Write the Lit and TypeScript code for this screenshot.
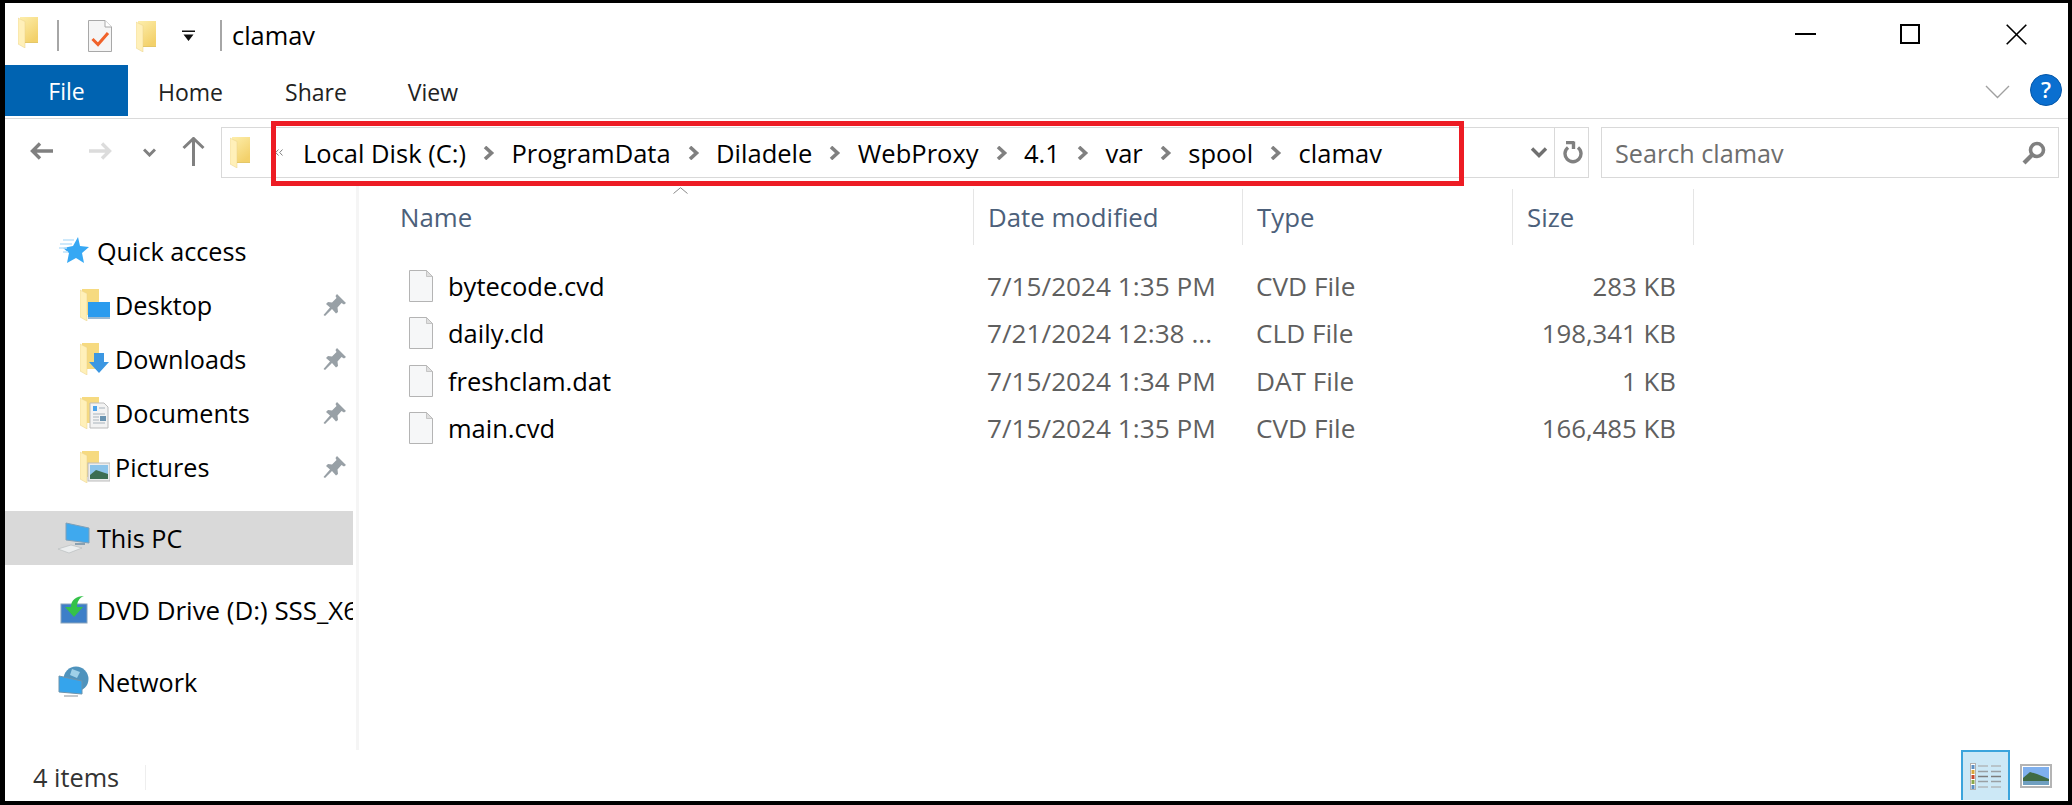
import { LitElement, html, svg, css } from "lit";
import { customElement } from "lit/decorators.js";

const folder = (cls = "") => html`<svg class=${cls} width="20" height="31" viewBox="0 0 20 31">
  <defs><linearGradient id="fb" x1="0" y1="0" x2="0.6" y2="1"><stop offset="0" stop-color="#fdeeac"/><stop offset="1" stop-color="#f3d16b"/></linearGradient></defs>
  <path d="M2 0H20V25H2z" fill="url(#fb)"/>
  <path d="M0 1 L7 4.500 V31 L0 27z" fill="#fff0b9" stroke="#e8d08a" stroke-width=".5"/>
  <path d="M7 25H20V26H7z" fill="#e4c768"/>
</svg>`;

const childIcon = (overlay: unknown) => html`<svg width="30" height="32" viewBox="0 0 30 32">
  <path d="M2 0H19V26H2z" fill="#f6da80"/>
  <path d="M0 1 L7 4.500 V32 L0 28z" fill="#fff0b9" stroke="#e8d08a" stroke-width=".5"/>
  ${overlay}
</svg>`;

const pin = html`<svg width="24" height="24" viewBox="0 0 24 24">
  <path d="M14 1 L23 10 L21 11.500 L18.500 10 L14.500 14.500 L15 19 L13 20.500 L9 16 L2 23 L0.500 22 L7 14.500 L3 11 L5 9 L9 9.500 L13.500 5 L12.500 3z" fill="#98a0a6"/>
</svg>`;

const fileIcon = html`<svg width="24" height="32" viewBox="0 0 24 32">
  <path d="M.5.5H17.500L23.500 6.500V31.500H.5z" fill="#f6f7f8" stroke="#b4b4b4"/>
  <path d="M17.500.5V6.500H23.500z" fill="#dfdfdf" stroke="#b4b4b4" stroke-width=".7"/>
</svg>`;

const chev = html`<svg class="chev" width="12" height="14" viewBox="0 0 12 14"><path d="M2 1 L8.500 7 L2 13" fill="none" stroke="#808080" stroke-width="3.600"/></svg>`;

const files = [
  ["bytecode.cvd", "7/15/2024 1:35 PM", "CVD File", "283 KB"],
  ["daily.cld", "7/21/2024 12:38 ...", "CLD File", "198,341 KB"],
  ["freshclam.dat", "7/15/2024 1:34 PM", "DAT File", "1 KB"],
  ["main.cvd", "7/15/2024 1:35 PM", "CVD File", "166,485 KB"],
];
const crumbs = ["Local Disk (C:)", "ProgramData", "Diladele", "WebProxy", "4.1", "var", "spool", "clamav"];

@customElement("app-root")
export class AppRoot extends LitElement {
  static styles = css`
    :host { display: block; width: 2072px; height: 805px; font-family: "Open Sans", "Noto Sans", sans-serif; font-size: 25.2px; color: #000; }
    * { box-sizing: border-box; }
    svg { display: block; flex: none; }
    .frame { position: relative; width: 2072px; height: 805px; background: #fff; border: solid #000; border-width: 3px 4px 4px 5px; display: flex; flex-direction: column; overflow: hidden; }

    .title { height: 62px; display: flex; align-items: center; flex: none; }
    .title .f1 { margin-left: 13px; margin-top: -4px; }
    .tsep { width: 2px; height: 31px; background: #a6a6a6; margin-top: 3px; }
    .title .s1 { margin-left: 19px; }
    .title .doc { margin-left: 29px; margin-top: 4px; }
    .title .f2 { margin-left: 24px; margin-top: 5px; }
    .title .drop { margin-left: 26px; margin-top: 3px; }
    .title .s2 { margin-left: 25px; }
    .ttext { margin-left: 10px; font-size: 25.4px; line-height: 30px; margin-top: 1px; }
    .wctl { margin-left: auto; display: flex; align-items: center; }
    .wctl .min { margin-right: 84px; }
    .wctl .max { margin-right: 86px; }
    .wctl .cls { margin-right: 41px; }

    .tabs { height: 54px; flex: none; display: flex; align-items: flex-start; border-bottom: 1px solid #dadada; }
    .file-tab { width: 123px; height: 51px; background: #0063b1; color: #fff; display: flex; align-items: center; justify-content: center; font-size: 23px; padding-top: 1px; }
    .tab { font-size: 23px; line-height: 55px; color: #222; }
    .tab.home { margin-left: 30px; }
    .tab.share { margin-left: 62px; }
    .tab.view { margin-left: 61px; }
    .tabs .rchev { margin-left: auto; margin-top: 20px; }
    .tabs .help { margin: 9px 6px 0 20px; width: 32px; height: 32px; border-radius: 50%; background: #0a6fd0; border: 1px solid #0557a8; color: #fff; font-size: 22px; line-height: 29px; text-align: center; font-weight: 600; }

    .nav { height: 67px; flex: none; display: flex; align-items: flex-start; padding-top: 8px; }
    .nav .back { margin-left: 25px; margin-top: 15px; }
    .nav .fwd { margin-left: 36px; margin-top: 15px; }
    .nav .down { margin-left: 31px; margin-top: 21px; }
    .nav .up { margin-left: 26px; margin-top: 10px; }
    .addr { margin-left: 16px; width: 1368px; height: 51px; border: 1px solid #d9d9d9; display: flex; align-items: center; }
    .addr .afolder { margin-left: 8px; }
    .addr .dbl { margin-left: 25px; margin-right: 20px; }
    .crumb { display: flex; align-items: center; gap: 17px; margin-right: 16.5px; font-size: 25.5px; line-height: 30px; white-space: nowrap; }
    .addr .adown { margin-left: auto; margin-right: 6px; }
    .addr .rsep { width: 1px; height: 49px; background: #d9d9d9; margin-right: 8px; }
    .addr .refresh { margin-right: 5px; }
    .search { margin-left: 12px; width: 458px; height: 51px; border: 1px solid #d9d9d9; display: flex; align-items: center; justify-content: space-between; padding: 0 12px 0 13px; color: #6d6d6d; font-size: 25.2px; }

    .red { position: absolute; left: 266px; top: 118px; width: 1193px; height: 65px; border: 5px solid #ed1c24; pointer-events: none; }

    .main { flex: 1; min-height: 0; display: flex; }
    .side { width: 348px; flex: none; padding-top: 38px; overflow: hidden; }
    .vline { width: 6px; flex: none; background: linear-gradient(90deg, #fff 0 3px, #f5f5f5 3px); }
    .row { height: 54px; display: flex; align-items: center; white-space: nowrap; overflow: hidden; position: relative; }
    .row.top { padding-left: 55px; gap: 7px; }
    .row.sub { padding-left: 75px; gap: 5px; }
    .row.top svg { width: 32px; margin-left: -2px; }
    .row.sel { background: #d9d9d9; }
    .row .pin { margin-left: auto; margin-right: 6px; }
    .row.dvd { font-size: 25.9px; }
    .g { margin-top: 17px; }
    .g2 { margin-top: 18px; }

    .list { flex: 1; min-width: 0; padding-top: 3px; position: relative; }
    .cols { display: grid; grid-template-columns: 615px 269px 270px 181px; }
    .head { height: 56px; }
    .head > div { border-right: 1px solid #e5e5e5; display: flex; align-items: center; color: #4c607a; font-size: 25.8px; padding-left: 14px; height: 56px; }
    .head > div:first-child { padding-left: 41px; }
    .sort { position: absolute; left: 314px; top: 1px; }
    .rows { padding-top: 17px; }
    .frow { height: 47.5px; align-items: center; color: #5f5f5f; font-size: 26.2px; }
    .frow > div { padding-left: 13px; white-space: nowrap; }
    .frow .nm { padding-left: 50px; display: flex; align-items: center; gap: 15px; color: #000; font-size: 25.5px; }
    .frow .sz { text-align: right; padding: 0 18px 0 0; font-size: 25.8px; }

    .status { height: 51px; flex: none; display: flex; align-items: flex-start; font-size: 25.3px; color: #333; }
    .status .cnt { margin-left: 28px; line-height: 55px; }
    .status .ssep { margin-left: 26px; margin-top: 15px; width: 1px; height: 25px; background: #eee; }
    .status .det { margin-left: auto; width: 49px; height: 50px; background: #cce8f6; border: 2px solid #3ba4dc; border-bottom: 0; display: flex; align-items: center; justify-content: center; }
    .status .lg { margin: 14px 16px 0 10px; }
  `;

  render() {
    return html`<div class="frame">
      <div class="title">
        ${folder("f1")}
        <div class="tsep s1"></div>
        <svg class="doc" width="24" height="32" viewBox="0 0 24 32">
          <path d="M.5.5H17L23.500 7V31.500H.5z" fill="#f5f5f5" stroke="#a8a8a8"/>
          <path d="M17 .5V7H23.500" fill="#fff" stroke="#a8a8a8"/>
          <path d="M4.500 19 L10 24.500 L20 13" fill="none" stroke="#f0622a" stroke-width="3"/>
        </svg>
        ${folder("f2")}
        <svg class="drop" width="13" height="12" viewBox="0 0 13 12"><path d="M0 .5H13V2H0z M1.500 4.500H11.500L6.500 11z" fill="#111"/></svg>
        <div class="tsep s2"></div>
        <div class="ttext">clamav</div>
        <div class="wctl">
          <svg class="min" width="21" height="2" viewBox="0 0 21 2"><path d="M0 0H21V2H0z" fill="#000"/></svg>
          <svg class="max" width="20" height="20" viewBox="0 0 20 20"><rect x="1" y="1" width="18" height="18" fill="none" stroke="#000" stroke-width="2"/></svg>
          <svg class="cls" width="21" height="21" viewBox="0 0 21 21"><path d="M.7.7L20.300 20.300M20.300.7L.7 20.300" stroke="#000" stroke-width="1.600" fill="none"/></svg>
        </div>
      </div>

      <div class="tabs">
        <div class="file-tab">File</div>
        <div class="tab home">Home</div>
        <div class="tab share">Share</div>
        <div class="tab view">View</div>
        <svg class="rchev" width="25" height="14" viewBox="0 0 25 14"><path d="M1 1 L12.500 12.500 L24 1" fill="none" stroke="#a0a0a0" stroke-width="1.400"/></svg>
        <div class="help">?</div>
      </div>

      <div class="nav">
        <svg class="back" width="23" height="18" viewBox="0 0 23 18"><path d="M10 1.500 L2.500 9 L10 16.500 M3 9H23" fill="none" stroke="#808080" stroke-width="3.400"/></svg>
        <svg class="fwd" width="23" height="18" viewBox="0 0 23 18"><path d="M13 1.500 L20.500 9 L13 16.500 M20 9H0" fill="none" stroke="#dcdcdc" stroke-width="3.400"/></svg>
        <svg class="down" width="13" height="9" viewBox="0 0 13 9"><path d="M1 1.500 L6.500 7 L12 1.500" fill="none" stroke="#808080" stroke-width="3"/></svg>
        <svg class="up" width="23" height="29" viewBox="0 0 23 29"><path d="M1.500 11 L11.500 1.500 L21.500 11 M11.500 2V29" fill="none" stroke="#808080" stroke-width="3"/></svg>
        <div class="addr">
          ${folder("afolder")}
          <svg class="dbl" width="8" height="7" viewBox="0 0 8 7"><path d="M3.500 .5 L.7 3.500 L3.500 6.500 M7.500 .5 L4.700 3.500 L7.500 6.500" fill="none" stroke="#808080"/></svg>
          ${crumbs.map((c, i) => html`<div class="crumb"><span>${c}</span>${i < crumbs.length - 1 ? chev : ""}</div>`)}
          <svg class="adown" width="18" height="11" viewBox="0 0 18 11"><path d="M2 1.500 L9 8.500 L16 1.500" fill="none" stroke="#707070" stroke-width="3.400"/></svg>
          <div class="rsep"></div>
          <svg class="refresh" width="20" height="24" viewBox="0 0 20 24"><path d="M5 6.500 A8 8 0 1 0 15 6.500 M3 1.500 L11 1.500 M10.500 .5 V8" fill="none" stroke="#808080" stroke-width="3.400"/></svg>
        </div>
        <div class="search">
          <span>Search clamav</span>
          <svg width="24" height="24" viewBox="0 0 24 24"><circle cx="15" cy="9" r="6.500" fill="none" stroke="#808080" stroke-width="3.600"/><path d="M10 14 L2 22" stroke="#808080" stroke-width="4.200"/></svg>
        </div>
      </div>

      <div class="red"></div>

      <div class="main">
        <div class="side">
          <div class="row top">
            <svg width="32" height="28" viewBox="0 0 30 28"><path d="M19 0 L21 9 L30 10 L23 16 L25 26 L17 21 L8 26 L10 16 L4 11 L14 9z" fill="#36a8f4"/><path d="M4 3H15M1 7H13M0 11H8M4 15H9" stroke="#bfe2fa" stroke-width="1.400"/></svg>
            Quick access
          </div>
          <div class="row sub">
            ${childIcon(svg`<rect x="8" y="13" width="22" height="17" fill="#2a9bee"/><rect x="8" y="28" width="22" height="2" fill="#9ab8d0"/>`)}
            Desktop <span class="pin">${pin}</span>
          </div>
          <div class="row sub">
            ${childIcon(svg`<path d="M14 10H24V19H29L19 30L9 19H14z" fill="#3c97e2"/>`)}
            Downloads <span class="pin">${pin}</span>
          </div>
          <div class="row sub">
            ${childIcon(svg`<path d="M10 6H24L28 10V31H10z" fill="#f3f3f3" stroke="#bbb"/><path d="M13 9H17V14H13z" fill="#4aa3ea"/><path d="M19 11H25M13 17H25M13 20H19M13 23H19M13 26H25" stroke="#aab4bc" stroke-width="1.200"/><rect x="20" y="19" width="6" height="5" fill="#6a93b0"/>`)}
            Documents <span class="pin">${pin}</span>
          </div>
          <div class="row sub">
            ${childIcon(svg`<rect x="8" y="12" width="22" height="18" fill="#ededed" stroke="#bbb"/><rect x="10" y="14" width="18" height="14" fill="#8cc4ea"/><path d="M10 24 L16 19 L28 23 V28 H10z" fill="#3c6e52"/>`)}
            Pictures <span class="pin">${pin}</span>
          </div>
          <div class="row top sel g">
            <svg width="32" height="32" viewBox="0 0 32 32"><path d="M8 1 L31 6 V21 L8 18z" fill="#3fa9ee" stroke="#7fa0b8"/><path d="M0 27 L13 23 L24 26 L11 31z" fill="#eceeef" stroke="#b4b8bb" stroke-width=".6"/><path d="M17 21 L27 21 V23 L17 23z" fill="#8aa0b0"/></svg>
            This PC
          </div>
          <div class="row top g2 dvd">
            <svg width="32" height="30" viewBox="0 0 30 30"><rect x="2" y="9" width="26" height="19" fill="#3d7fc8" stroke="#8aa4bc"/><path d="M12 14 L6 14 L15 24 L24 14 L18 14 C18 9 20 5 25 3 C17 3 12 7 12 14z" fill="#35c24a" transform="translate(0 -2)"/></svg>
            DVD Drive (D:) SSS_X64FRE_EN-US_DV9
          </div>
          <div class="row top g2">
            <svg width="32" height="32" viewBox="0 0 32 32"><circle cx="18" cy="13" r="12.500" fill="#4f93bd"/><path d="M14 3 L22 6 L19 12 L12 9z" fill="#9fd0e8"/><path d="M1 10 L24 15 V28 L1 26z" fill="#35a4ec" stroke="#6f94ac"/><path d="M6 29 H20 V31 H6z" fill="#c4c8cc"/></svg>
            Network
          </div>
        </div>
        <div class="vline"></div>
        <div class="list">
          <svg class="sort" width="15" height="7" viewBox="0 0 15 7"><path d="M.5 6.500 L7.500 .7 L14.500 6.500" fill="none" stroke="#8a8a8a" stroke-width="1"/></svg>
          <div class="cols head"><div>Name</div><div>Date modified</div><div>Type</div><div>Size</div></div>
          <div class="rows">
            ${files.map((f) => html`<div class="cols frow">
              <div class="nm">${fileIcon}<span>${f[0]}</span></div>
              <div>${f[1]}</div><div>${f[2]}</div><div class="sz">${f[3]}</div>
            </div>`)}
          </div>
        </div>
      </div>

      <div class="status">
        <div class="cnt">4 items</div>
        <div class="ssep"></div>
        <div class="det">
          <svg width="31" height="27" viewBox="0 0 31 27">
            <rect x=".5" y=".5" width="5" height="26" fill="#fff" stroke="#b0b0b0"/>
            <rect x="1.500" y="2" width="3" height="4" fill="#5b8fc4"/><rect x="1.500" y="7" width="3" height="4" fill="#d9a53a"/><rect x="1.500" y="12" width="3" height="4" fill="#c8482c"/><rect x="1.500" y="17" width="3" height="4" fill="#8ba84a"/><rect x="1.500" y="22" width="3" height="4" fill="#5b8fc4"/>
            <path d="M8 3H18M21 3H31M8 24H18M21 24H31" stroke="#b8c4ca" stroke-width="2"/>
            <path d="M8 8.500H18M21 8.500H31M8 18.500H18M21 18.500H31" stroke="#9aa0a4" stroke-width="1.500"/>
            <path d="M8 13.500H18M21 13.500H31" stroke="#7d7d7d" stroke-width="1.500"/>
          </svg>
        </div>
        <svg class="lg" width="32" height="24" viewBox="0 0 32 24">
          <rect x="1" y="1" width="30" height="22" fill="#fff" stroke="#b4b4b4" stroke-width="2"/>
          <rect x="3" y="3" width="26" height="18" fill="#7fb0ee"/>
          <path d="M3 14 L10 8 L17 10 L29 15 V21H3z" fill="#3f6a44"/>
          <path d="M3 17H29V21H3z" fill="#6f9fc0"/>
        </svg>
      </div>
    </div>`;
  }
}
